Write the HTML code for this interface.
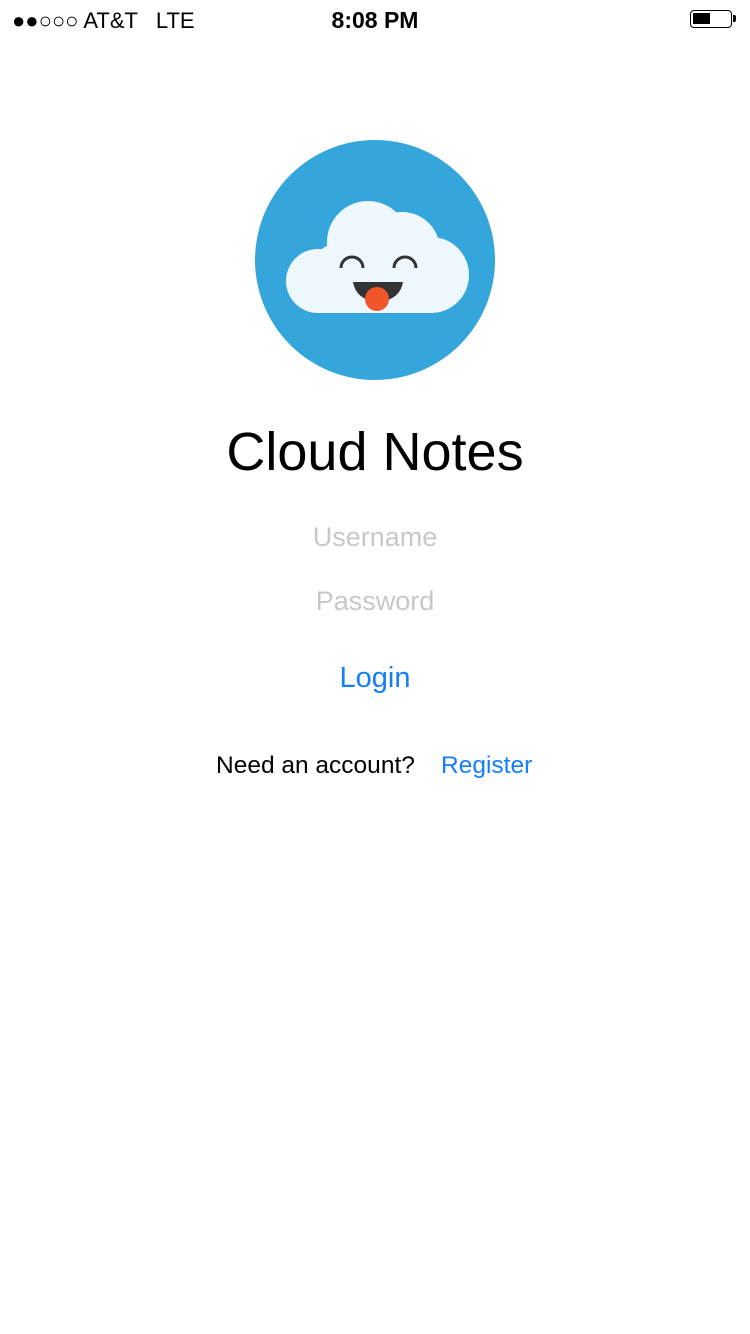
<!DOCTYPE html>
<html><head><meta charset="utf-8"><style>
body{margin:0;width:750px;height:1334px;background:#fff;font-family:"Liberation Sans",sans-serif;position:relative;overflow:hidden}
.t{position:absolute;left:0;width:750px;text-align:center;white-space:nowrap}
</style></head><body>
<div style="position:absolute;left:12px;top:8px;font-size:22px;">●●○○○ AT&amp;T &nbsp; LTE</div>
<div class="t" style="top:7px;font-size:23px;font-weight:bold;">8:08 PM</div>
<div style="position:absolute;left:690px;top:10px;width:42px;height:18px;border:1.5px solid #000;border-radius:4px;box-sizing:border-box;"><div style="position:absolute;left:2px;top:2px;width:17px;height:11px;background:#000"></div></div>
<div style="position:absolute;left:733px;top:15px;width:3px;height:7px;background:#000;border-radius:0 2px 2px 0"></div>
<svg style="position:absolute;left:0;top:0" width="750" height="400">
<circle cx="375" cy="260" r="120" fill="#35a6dc"/>
<g fill="#eef7fd">
<circle cx="368" cy="242" r="41"/>
<circle cx="402" cy="250" r="38"/>
<circle cx="431" cy="275" r="38"/>
<circle cx="336" cy="266" r="22"/>
<circle cx="318" cy="281" r="32"/>
<rect x="318" y="265" width="115" height="48"/>
</g>
<path d="M341 268 a11 11 0 0 1 22 0 M394 268 a11 11 0 0 1 22 0" stroke="#333" stroke-width="3" fill="none"/>
<path d="M353 282 L403 282 Q400 300 378 302 Q356 300 353 282Z" fill="#333"/>
<circle cx="377" cy="299" r="12" fill="#f0562a"/>
</svg>
<div class="t" style="top:421px;font-size:54px;color:#000;">Cloud Notes</div>
<div class="t" style="top:522px;font-size:27px;color:#c7c7cd;">Username</div>
<div class="t" style="top:586px;font-size:27px;color:#c7c7cd;">Password</div>
<div class="t" style="top:662px;font-size:29px;color:#147efb;">Login</div>
<div style="position:absolute;left:216px;top:752px;font-size:24.5px;">Need an account?</div>
<div style="position:absolute;left:441px;top:752px;font-size:24.5px;color:#147efb;">Register</div>
</body></html>
